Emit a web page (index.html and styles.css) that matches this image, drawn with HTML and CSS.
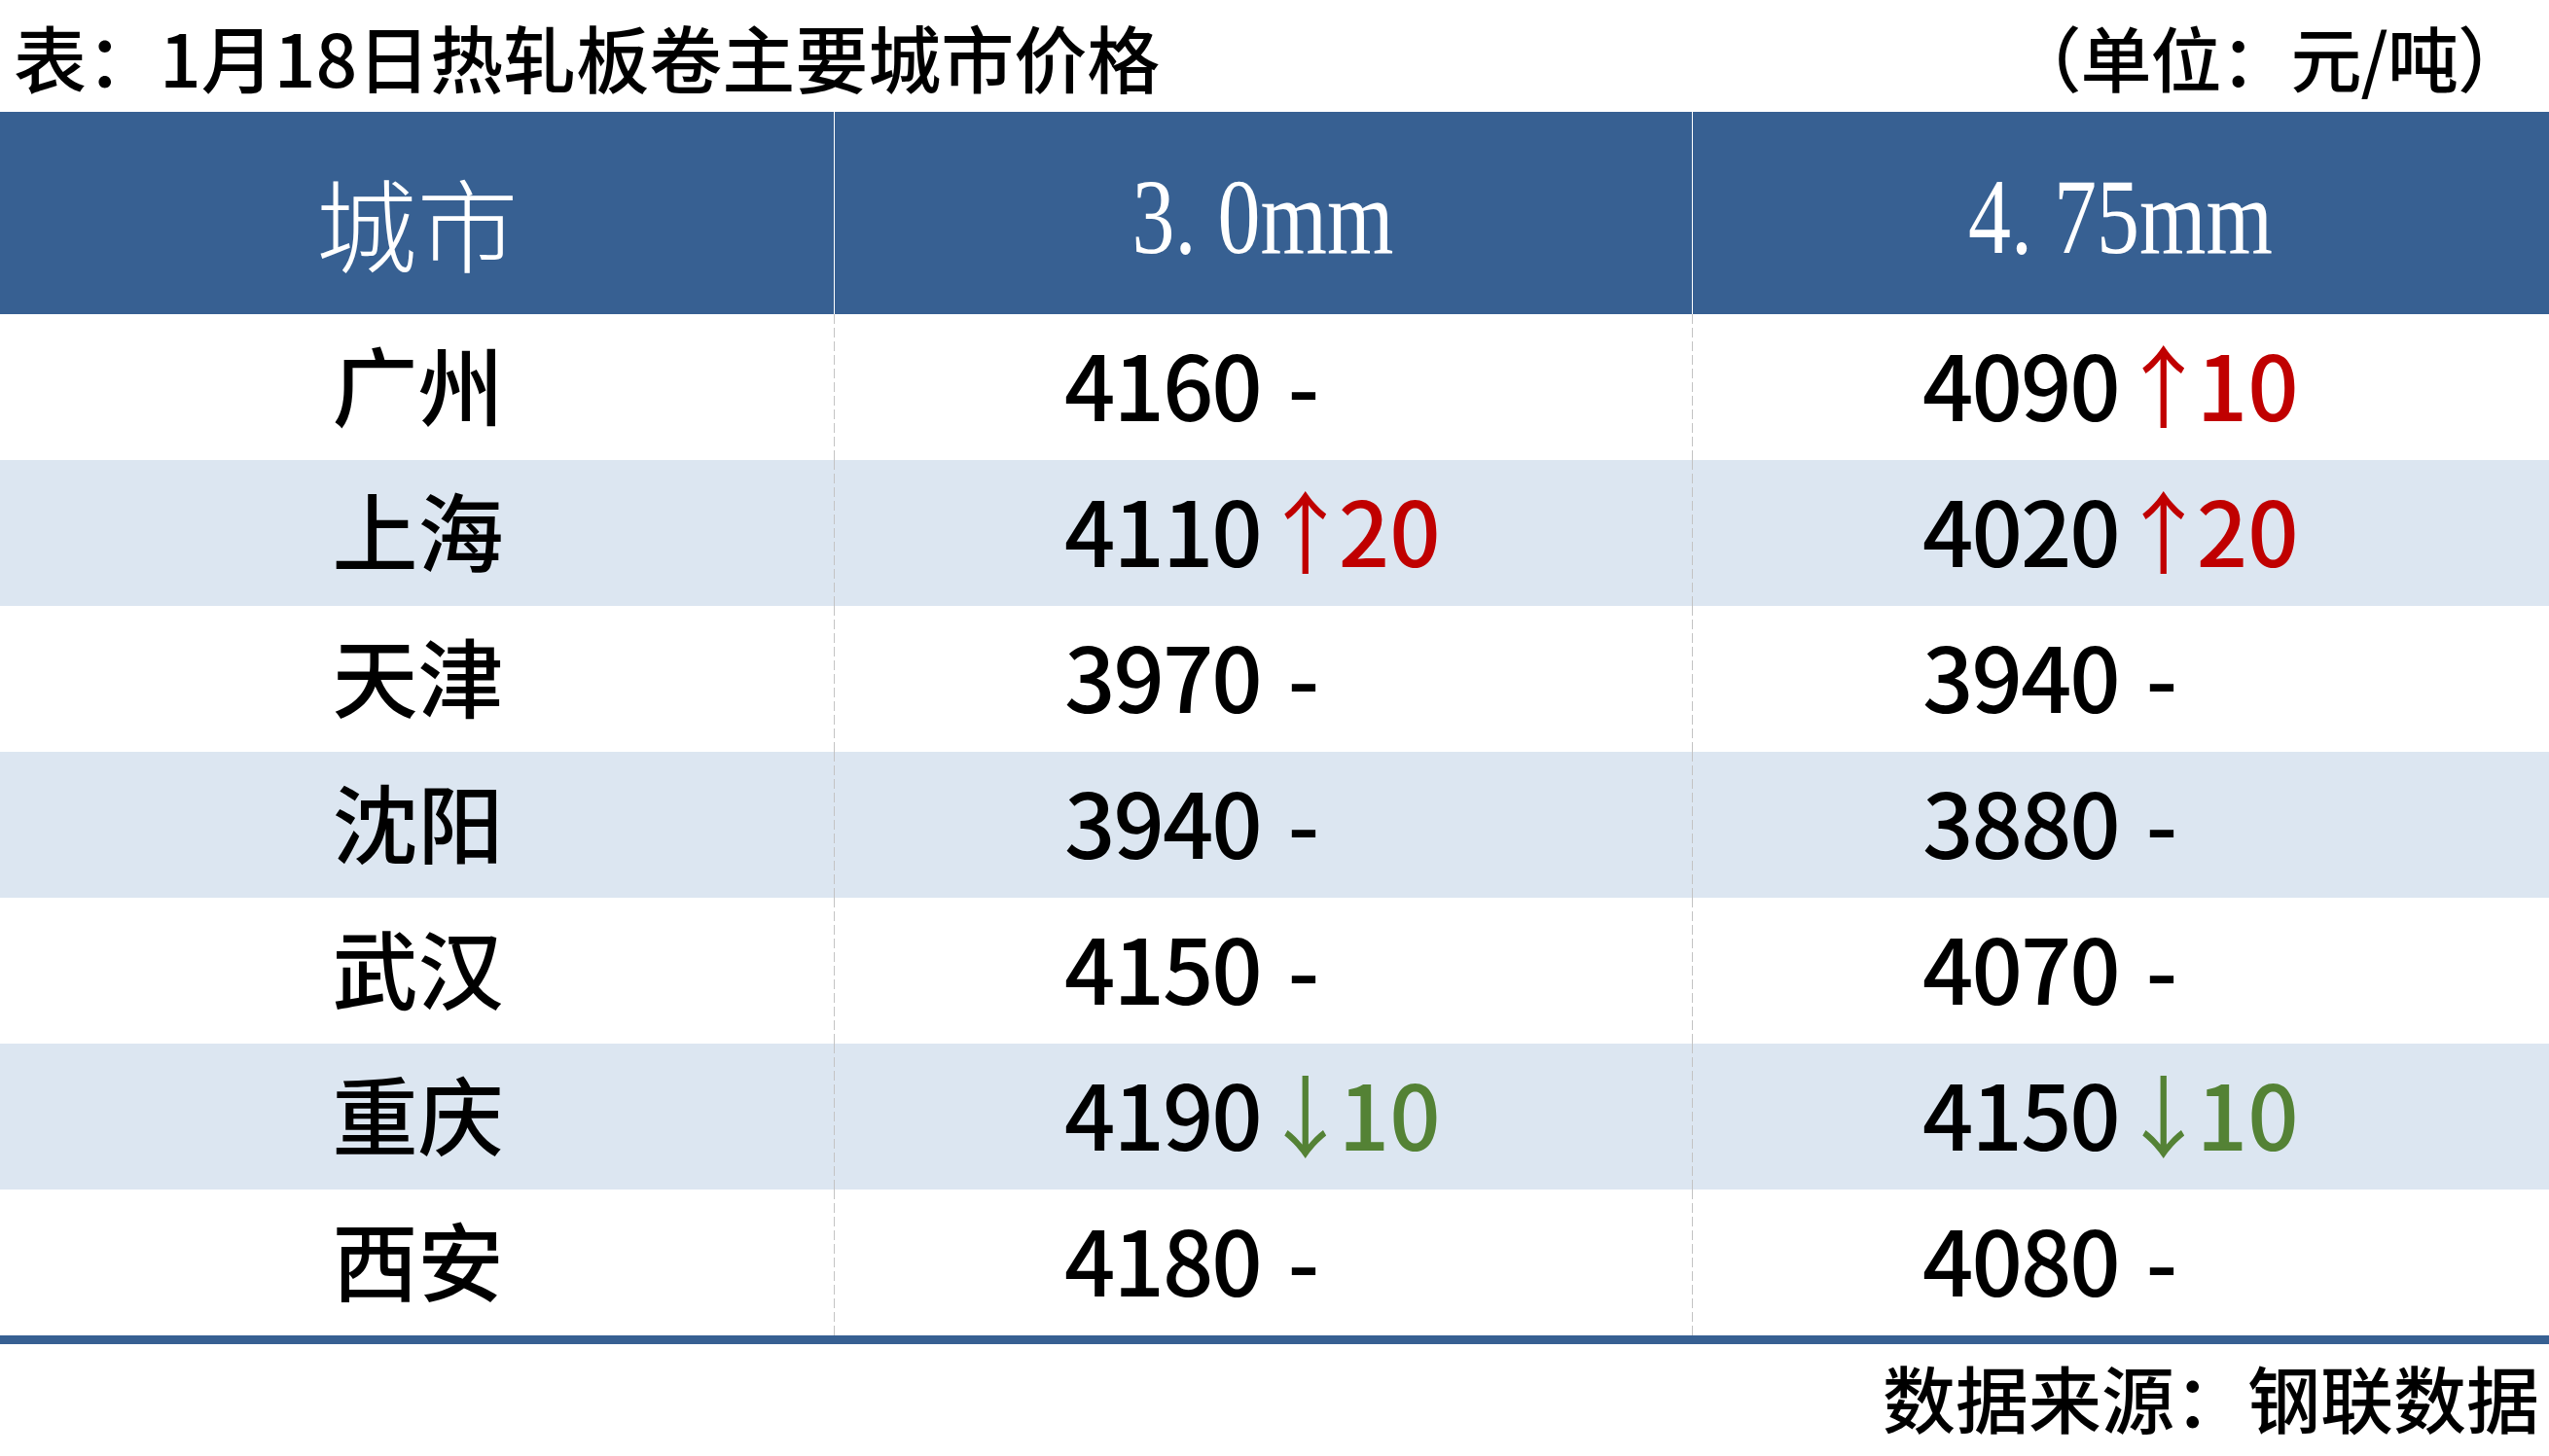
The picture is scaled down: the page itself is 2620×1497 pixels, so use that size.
FILE: index.html
```html
<!DOCTYPE html>
<html lang="zh-CN">
<head>
<meta charset="utf-8">
<title>1月18日热轧板卷主要城市价格</title>
<link rel="stylesheet" href="styles.css">
</head>
<body>
<div class="page">
  <div class="caption">
    <span class="title">表：1月18日热轧板卷主要城市价格</span>
    <span class="unit">（单位：元/吨）</span>
  </div>
  <div class="table">
    <div class="row head">
      <div class="cell hcity">城市</div>
      <div class="cell hsize"><span class="hlat">3. 0mm</span></div>
      <div class="cell hsize"><span class="hlat">4. 75mm</span></div>
    </div>
    <div class="row">
      <div class="cell city">广州</div>
      <div class="cell val"><span class="num">4160</span><span class="flat"> -</span></div>
      <div class="cell val"><span class="num">4090</span><span class="up"><span class="arrow">↑</span>10</span></div>
    </div>
    <div class="row alt">
      <div class="cell city">上海</div>
      <div class="cell val"><span class="num">4110</span><span class="up"><span class="arrow">↑</span>20</span></div>
      <div class="cell val"><span class="num">4020</span><span class="up"><span class="arrow">↑</span>20</span></div>
    </div>
    <div class="row">
      <div class="cell city">天津</div>
      <div class="cell val"><span class="num">3970</span><span class="flat"> -</span></div>
      <div class="cell val"><span class="num">3940</span><span class="flat"> -</span></div>
    </div>
    <div class="row alt">
      <div class="cell city">沈阳</div>
      <div class="cell val"><span class="num">3940</span><span class="flat"> -</span></div>
      <div class="cell val"><span class="num">3880</span><span class="flat"> -</span></div>
    </div>
    <div class="row">
      <div class="cell city">武汉</div>
      <div class="cell val"><span class="num">4150</span><span class="flat"> -</span></div>
      <div class="cell val"><span class="num">4070</span><span class="flat"> -</span></div>
    </div>
    <div class="row alt">
      <div class="cell city">重庆</div>
      <div class="cell val"><span class="num">4190</span><span class="down"><span class="arrow">↓</span>10</span></div>
      <div class="cell val"><span class="num">4150</span><span class="down"><span class="arrow">↓</span>10</span></div>
    </div>
    <div class="row">
      <div class="cell city">西安</div>
      <div class="cell val"><span class="num">4180</span><span class="flat"> -</span></div>
      <div class="cell val"><span class="num">4080</span><span class="flat"> -</span></div>
    </div>
  </div>
  <div class="source">数据来源：钢联数据</div>
</div>
</body>
</html>
```

FILE: styles.css
```css
html, body {
  margin: 0;
  padding: 0;
  background: #ffffff;
}

.page {
  width: 2620px;
  font-family: "Noto Sans CJK SC", "Noto Sans", sans-serif;
  color: #000000;
}

.caption {
  height: 115px;
  display: flex;
  align-items: center;
  justify-content: space-between;
  padding: 0 22px 0 14px;
  font-size: 75px;
  font-weight: 500;
  line-height: 1;
}

.unit {
  font-size: 73px;
  letter-spacing: -1px;
}

.table {
  border-bottom: 9px solid #376092;
}

.row {
  display: grid;
  grid-template-columns: 857px 882px 1fr;
  height: 150px;
  background: #ffffff;
}

.row.alt {
  background: #dce6f1;
}

.row.head {
  height: 208px;
  background: #376092;
}

.cell {
  display: flex;
  align-items: center;
  min-width: 0;
}

.row .cell + .cell {
  background-image: repeating-linear-gradient(to bottom, #c3c3c3 0 10px, transparent 10px 14px);
  background-size: 2px 100%;
  background-repeat: no-repeat;
  background-position: -1px 0;
}

.row.head .cell + .cell {
  background-image: linear-gradient(#ffffff, #ffffff);
}

.hcity {
  justify-content: center;
  color: #ffffff;
  font-size: 104px;
  font-weight: 300;
  padding-top: 16px;
}

.hsize {
  justify-content: center;
  color: #ffffff;
}

.hlat {
  display: inline-block;
  font-family: "Liberation Serif", "DejaVu Serif", serif;
  font-size: 110px;
  line-height: 1;
  transform: scaleX(0.8);
  padding-top: 8px;
  white-space: pre;
}

.city {
  justify-content: center;
  font-size: 88px;
  font-weight: 500;
  padding-left: 2px;
  padding-bottom: 12px;
}

.val {
  padding-left: 237px;
  padding-bottom: 12px;
  font-size: 92px;
  font-weight: 500;
  white-space: pre;
}

.num {
  letter-spacing: -2px;
}

.flat {
  padding-left: 7px;
}

.up {
  color: #c00000;
}

.down {
  color: #548235;
}

.arrow {
  font-weight: 400;
  letter-spacing: -12px;
}

.source {
  height: 106px;
  display: flex;
  align-items: center;
  justify-content: flex-end;
  padding-right: 10px;
  font-size: 75px;
  font-weight: 500;
  line-height: 1;
}
```
